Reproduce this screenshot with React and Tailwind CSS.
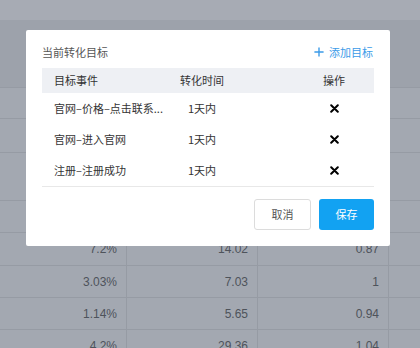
import { Plus } from 'lucide-react'

const BG_ROWS = [
  { h: 'h-[31px]', cells: ['', '', ''] },
  { h: 'h-[34px]', cells: ['', '', ''] },
  { h: 'h-[48px]', cells: ['', '', ''] },
  { h: 'h-[32px]', cells: ['', '', ''] },
  { h: 'h-[33px]', cells: ['7.2%', '14.02', '0.87'] },
  { h: 'h-[32px]', cells: ['3.03%', '7.03', '1'] },
  { h: 'h-[32px]', cells: ['1.14%', '5.65', '0.94'] },
  { h: 'h-[32px]', cells: ['4.2%', '29.36', '1.04'] },
]

const GOALS = [
  { name: '官网–价格–点击联系...', time: '1天内' },
  { name: '官网–进入官网', time: '1天内' },
  { name: '注册–注册成功', time: '1天内' },
]

function CloseMark() {
  return (
    <svg width="9" height="9" viewBox="0 0 9 9" className="text-black">
      <path d="M1.2 1.2 L7.8 7.8 M7.8 1.2 L1.2 7.8" stroke="currentColor" strokeWidth="2" strokeLinecap="round" />
    </svg>
  )
}

export default function App() {
  return (
    <div className="relative w-[420px] h-[348px] overflow-hidden bg-[#a3a8b1] font-['Liberation_Sans','Noto_Sans_CJK_SC',sans-serif]">
      {/* masked table behind the dialog */}
      <div className="h-[20px] bg-[#a7abb4]" />
      <div className="h-[67px] bg-[#9da2ab]" />
      {BG_ROWS.map((r, i) => (
        <div key={i} className={`flex ${r.h} border-t border-[#969ba4]`}>
          {r.cells.map((c, j) => (
            <div key={j} className="w-[131px] first:w-[127px] flex items-center justify-end pr-[9px] border-r border-[#969ba4] text-[12px] text-[#4e535b]">
              {c}
            </div>
          ))}
          <div className="flex-1" />
        </div>
      ))}

      {/* dialog */}
      <div className="absolute left-[26px] top-[30px] w-[364px] h-[216px] bg-white rounded-[2px] px-[16px] pt-[14px] font-['Noto_Sans_CJK_SC',sans-serif]">
        <div className="flex items-center justify-between h-[16px] mb-[8px]">
          <span className="text-[11px] text-[#555]">当前转化目标</span>
          <span className="flex items-center gap-[3px] text-[11px] text-[#3b9be8] pr-[1px]">
            <Plus size={14} strokeWidth={2.4} />
            添加目标
          </span>
        </div>

        <div className="flex items-center h-[25px] bg-[#eef0f4] text-[11px] text-[#333]">
          <div className="w-[138px] pl-[12px]">目标事件</div>
          <div className="w-[114px]">转化时间</div>
          <div className="flex-1 text-center">操作</div>
        </div>

        <div className="border-b border-[#e8e8e8]">
          {GOALS.map((g, i) => (
            <div key={i} className="flex items-center h-[31px] text-[11px] text-[#333]">
              <div className="w-[138px] pl-[12px] whitespace-nowrap">{g.name}</div>
              <div className="w-[114px] pl-[8px]">{g.time}</div>
              <div className="flex-1 flex justify-center">
                <CloseMark />
              </div>
            </div>
          ))}
        </div>

        <div className="flex justify-end gap-[8px] mt-[12px]">
          <button className="w-[57px] h-[31px] rounded-[3px] border border-[#dcdcdc] bg-white text-[11px] text-[#555]">
            取消
          </button>
          <button className="w-[55px] h-[31px] rounded-[3px] bg-[#12a2f2] text-[11px] text-white">
            保存
          </button>
        </div>
      </div>
    </div>
  )
}
